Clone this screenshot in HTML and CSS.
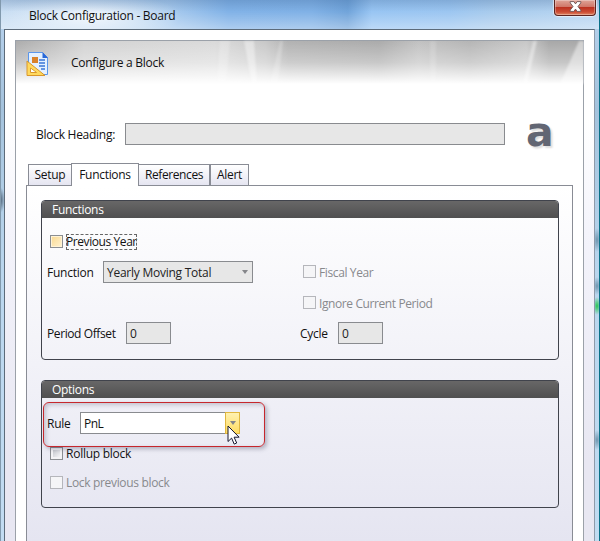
FILE: index.html
```html
<!DOCTYPE html>
<html lang="en">
<head>
<meta charset="utf-8">
<title>Block Configuration - Board</title>
<link rel="stylesheet" href="styles.css">
</head>
<body>
<div class="window">
  <header class="titlebar">
    <span class="title">Block Configuration - Board</span>
    <button class="close" aria-label="Close">
      <svg width="13" height="11" viewBox="0 0 13 11"><path d="M1.200.6h3.700l1.600 2.300L8.100.6h3.700v1.300L9 5.500l2.800 3.600v1.300H8.100L6.500 8.100l-1.600 2.300H1.200V9.100L4 5.500 1.200 1.900z" fill="#fff" stroke="#6b5050" stroke-width=".9"/></svg>
    </button>
  </header>
  <main class="client">
    <section class="page">
      <div class="banner">
        <svg class="streaks" width="568" height="43" viewBox="0 0 568 43">
          <g fill="#fff">
            <path opacity=".22" d="M204 0h10l-4 43h-9z"/>
            <path opacity=".4" d="M228 0h10l3 43h-5z"/>
            <path opacity=".22" d="M264 0h3l-5 43h-8z"/>
            <path opacity=".15" d="M414 0h6v43h-6z"/>
            <path opacity=".4" d="M517 0h4l-10 43h-4z"/>
            <path opacity=".45" d="M563 0h5v43h-24z"/>
          </g>
        </svg>
        <svg class="doc" width="24" height="26" viewBox="0 0 24 26">
          <path d="M2.500 1.500h14l5 5v17h-19z" fill="#e4f1ff" stroke="#5b96ea"/>
          <path d="M16.500 1v6h5.500z" fill="#2868d8"/>
          <path d="M13 9h6M13 12h6M13 15h6M15 18h4" stroke="#3a76d6" stroke-width="1.300"/>
          <path d="M6 6h6v6H6z" fill="#d9822a"/>
          <path fill-rule="evenodd" d="M1 10l18 14.500H1zM4.500 17v4.500h6z" fill="#ffd95e" stroke="#d9972a"/>
          <path d="M5 18v3h4z" fill="#fff"/>
        </svg>
        <span class="caption">Configure a Block</span>
      </div>
      <div class="heading-row">
        <label class="heading-label">Block Heading:</label>
        <div class="field heading-field"></div>
        <span class="logo">a</span>
      </div>
      <nav class="tabs">
        <span class="tab tab-setup">Setup</span><span class="tab active">Functions</span><span class="tab tab-ref">References</span><span class="tab tab-alert">Alert</span>
      </nav>
      <div class="tabpanel">
        <section class="group functions">
          <h2>Functions</h2>
          <div class="columns">
            <div class="left">
              <div class="check hot"><i></i><span class="focus">Previous Year</span></div>
              <div class="row"><label class="function-label">Function</label><div class="field combo"><span>Yearly Moving Total</span><b class="arrow"></b></div></div>
              <div class="row offset"><label class="offset-label">Period Offset</label><div class="field num">0</div></div>
            </div>
            <div class="right">
              <div class="check disabled"><i></i><span class="fiscal">Fiscal Year</span></div>
              <div class="check disabled ignore"><i></i><span class="period">Ignore Current Period</span></div>
              <div class="row cycle"><label class="cycle-label">Cycle</label><div class="field num">0</div></div>
            </div>
          </div>
        </section>
        <section class="group options">
          <h2>Options</h2>
          <div class="row rule"><label class="rule-label">Rule</label><div class="field rule-combo"><span>PnL</span><div class="drop"><b class="arrow"></b></div></div></div>
          <div class="check rollup"><i></i><span>Rollup block</span></div>
          <div class="check disabled lock"><i></i><span>Lock previous block</span></div>
          <div class="highlight"></div>
          <svg class="cursor" width="14" height="21" viewBox="0 0 14 21"><path d="M1 1v15.500l3.600-3.400 2.600 6 2.500-1.100-2.600-5.800h5z" fill="#fff" stroke="#15152c"/></svg>
        </section>
      </div>
    </section>
  </main>
</div>
</body>
</html>
```
FILE: styles.css
```css
* { box-sizing: border-box; }
body { margin: 0; font: 12px/18px "Open Sans", "Noto Sans", sans-serif; color: #111; overflow: hidden; }
.window {
  width: 600px; height: 541px; display: flex; flex-direction: column;
  padding: 0 5px 0 4px;
  background:
    linear-gradient(90deg, #8199ad 0 1px, transparent 1px 599px, #087087 599px),
    radial-gradient(ellipse 5px 13px at 0 200px, #43566b, transparent),
    radial-gradient(ellipse 4px 9px at 597px 306px, #27c650, transparent),
    radial-gradient(ellipse 4px 9px at 597px 286px, #6f95ae, transparent),
    radial-gradient(ellipse 4px 12px at 597px 240px, #6f95ae, transparent),
    radial-gradient(ellipse 4px 10px at 597px 440px, #6f95ae, transparent),
    linear-gradient(#b9d3ee, #a5c3dd 20%, #bad6ee 50%, #c2dcf2);
}
.titlebar {
  height: 29px; flex: none; margin: 0 -4px 0 -3px; padding-left: 28px;
  display: flex; align-items: flex-start; justify-content: space-between;
  background:
    linear-gradient(rgba(50,90,140,.25), transparent 40%, rgba(255,255,255,.35)),
    radial-gradient(ellipse 90px 24px at 90px 16px, rgba(255,255,255,.8), transparent),
    linear-gradient(90deg, #c9def3, #a9cbee 28%, #81b2e7 38%, #80b1e6 52%, #71a4da 58%, #98c5f3 62%, #9cc6f1 75%, #a8cbed 82%, #b9d6f2);
}
.title { margin-top: 7px; letter-spacing: -.27px; white-space: nowrap; }
.close {
  width: 42px; height: 16px; margin-right: 3px; padding: 0 0 2px; border: 1px solid #5e2420; border-top: 0;
  border-radius: 0 0 4px 4px; display: flex; align-items: center; justify-content: center;
  background: linear-gradient(#dfa498, #d0786a 44%, #bb3020 48%, #cc4d35 80%, #e08764);
  box-shadow: inset 0 0 0 1px rgba(255,255,255,.3), 0 0 1px 1px rgba(255,255,255,.6);
}
.client { flex: 1; border: 1px solid #5c6b7a; border-right-color: #8d9baa; border-bottom: 0; padding: 10px 10px 0; background: linear-gradient(#fff 0 90px, #f4f4fb 200px, #e8e7f2 430px); }
.page { height: 501px; border: 1px solid #9ba1a9; border-bottom: 0; background: #fff; }
.banner {
  height: 43px; position: relative; display: flex;
  background:
    linear-gradient(rgba(255,255,255,0), rgba(255,255,255,.35) 50%, #fff),
    linear-gradient(90deg, #acacac, #d2d2d2 12%, #dadada 35%, #c8c8c8 44%, #b2b2b2 48%, #ababab 64%, #c1c1c1 71%, #b5b5b5 80%, #c8c8c8 90%, #a8a8a8 94%);
}
.streaks { position: absolute; left: 0; top: 0; filter: blur(1px); }
.doc { position: relative; margin: 10px 0 0 10px; flex: none; }
.caption { position: relative; margin: 13px 0 0 21px; letter-spacing: -.28px; }
.heading-row { display: flex; margin-top: 39px; height: 22px; }
.heading-label { width: 109px; padding: 3px 0 0 20px; letter-spacing: -.27px; white-space: nowrap; }
.field { height: 22px; border: 1px solid #898b8f; background: #e7e7e7; display: flex; align-items: center; flex: none; }
.heading-field { width: 380px; }
.logo { margin: -11px 0 0 21px; font: bold 41px/41px "DejaVu Sans", sans-serif; color: #626673; text-shadow: 2px 2px 2px #ddd; }
.tabs { display: flex; align-items: flex-end; height: 23px; margin: 18px 0 0 12px; position: relative; z-index: 1; }
.tab { height: 21px; border: 1px solid #898c95; border-bottom: 0; background: linear-gradient(#fff, #e5e5f1); text-align: center; line-height: 20px; letter-spacing: -.3px; margin-bottom: 1px; white-space: nowrap; }
.tab-setup { width: 44px; }
.tab.active { width: 68px; height: 23px; line-height: 21px; margin: 0 0 0 -1px; background: #fff; }
.tab-ref { width: 71px; border-left: 0; letter-spacing: -.4px; }
.tab-alert { width: 39px; }
.tabpanel { margin: -1px 10px 0; height: 356px; padding: 14px 14px 0; border: 1px solid #898c95; border-bottom: 0; background: linear-gradient(#fff, #e5e5f1); }
.group { position: relative; border: 1px solid #40434c; border-radius: 4px; margin-right: -1px; }
.functions { height: 160px; }
.options { height: 128px; margin-top: 20px; }
.group h2 { margin: 0; height: 17px; padding-left: 10px; background: linear-gradient(#686767, #4f4f50); color: #fff; font: inherit; line-height: 18px; letter-spacing: -.3px; border-radius: 3px 3px 0 0; }
.columns { display: flex; }
.left { width: 252px; flex: none; padding-top: 15px; }
.right { padding: 47px 0 0; }
.row { display: flex; height: 22px; align-items: center; letter-spacing: -.25px; }
.row label { white-space: nowrap; flex: none; padding-top: 2px; }
.left .row { padding-left: 5px; margin-top: 11px; }
.left .check { height: 17px; padding-left: 8px; }
.left .offset { margin-top: 39px; }
.function-label { width: 56px; }
.offset-label { width: 79px; letter-spacing: -.4px; }
.combo { width: 150px; padding: 2px 4px 0 3px; justify-content: space-between; white-space: nowrap; color: #222; }
.arrow { border: 3px solid transparent; border-top: 4px solid #85868a; border-bottom: 0; }
.combo .arrow { margin-top: -3px; }
.num { width: 45px; padding: 2px 0 0 3px; color: #222; }
.check { display: flex; align-items: center; height: 13px; letter-spacing: -.25px; white-space: nowrap; }
.check i { width: 13px; height: 13px; flex: none; border: 1px solid #8b8e92; margin-right: 3px; background: linear-gradient(135deg, #c5c8ce, #f4f4f6) center / 7px 7px no-repeat #f3f3f5; }
.hot i { background: linear-gradient(135deg, #fadb96, #fff0cb) center / 9px 9px no-repeat #fff3d6; }
.focus { height: 16px; width: 71px; line-height: 16px; outline: 1px dashed #666; outline-offset: -1px; letter-spacing: -.42px; }
.disabled { color: #88898d; }
.disabled i { border-color: #b5b6bb; background: #f5f5f7; }
.period { letter-spacing: -.4px; }
.fiscal { letter-spacing: -.38px; }
.right .check { padding-left: 9px; }
.right .check span { padding-top: 2px; }
.ignore { margin-top: 18px; }
.cycle { margin-top: 13px; padding-left: 6px; }
.cycle-label { width: 38px; }
.rule { margin: 14px 0 0 5px; }
.rule-label { width: 33px; }
.rule-combo { width: 160px; background: #fff; padding-left: 3px; justify-content: space-between; }
.rule-combo span { padding-top: 2px; letter-spacing: -.5px; }
.drop { width: 15px; height: 22px; margin-right: -1px; border: 1px solid #e0b63e; background: linear-gradient(#fff1b0, #ffdc62); display: flex; align-items: flex-start; justify-content: center; padding-top: 8px; }
.rollup { margin: 13px 0 0 8px; }
.lock { margin: 16px 0 0 8px; letter-spacing: -.33px; }
.rollup span, .lock span { padding-top: 1px; }
.highlight { position: absolute; left: 1px; top: 21px; width: 222px; height: 45px; border: 1px solid #c6272d; border-radius: 6px; box-shadow: 2px 2px 4px rgba(60,60,90,.35), inset 2px 2px 4px rgba(60,60,90,.25); }
.cursor { position: absolute; left: 185px; top: 44px; }
```
